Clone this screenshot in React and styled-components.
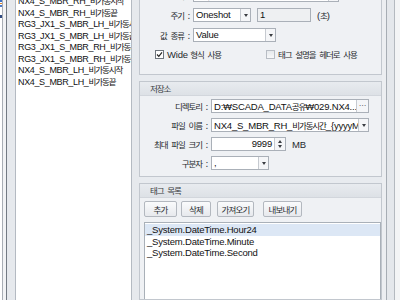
import React from 'react';
import styled, { createGlobalStyle } from 'styled-components';

const GlobalStyle = createGlobalStyle`
  html, body { margin: 0; padding: 0; }
  body {
    background: #e8ebef;
    font-family: "Liberation Sans", "Noto Sans CJK KR", sans-serif;
    font-size: 9.5px;
    letter-spacing: -0.2px;
    color: #111;
  }
`;

const Screen = styled.div`
  display: flex;
  width: 400px;
  height: 300px;
  overflow: hidden;
  background: #e8ebef;
`;

const EdgeMarks = styled.div`
  width: 2px;
  flex: none;
  background: linear-gradient(to bottom, #3b6fc4 0 2px, #fff 2px 3px, #d9822b 3px 4px, #fff 4px 5px, #4a78c8 5px 7px, #fff 7px 15px, #2f4a80 15px 18px, #fff 18px);
`;

const Sash = styled.div`
  width: 3px;
  flex: none;
  border-left: 1px solid #a9aeb5;
  border-right: 1px solid #737a83;
  background: #f2f3f5;
`;

const LeftPane = styled.div`
  width: 132px;
  flex: none;
  box-sizing: border-box;
  padding: 0 7px 0 8px;
  background: #e6e9ed;
`;

const ListBox = styled.div`
  height: 100%;
  box-sizing: border-box;
  background: #fff;
  border-left: 1px solid #b4bac2;
  border-right: 1px solid #b4bac2;
  overflow: hidden;
`;

const ListRows = styled.div`
  margin-top: ${p => p.$offset}px;
`;

const ListRow = styled.div`
  height: 11.5px;
  line-height: 11.5px;
  padding-left: 2px;
  white-space: nowrap;
  overflow: hidden;
  font-size: ${p => (p.$tight ? 9 : 9.5)}px;
  letter-spacing: ${p => (p.$tight ? -0.35 : -0.2)}px;
  background: ${p => (p.$selected ? '#dce7f5' : 'transparent')};
`;

const K = styled.span`
  font-family: "Noto Sans CJK KR", sans-serif;
  font-size: 8.5px;
  letter-spacing: -1.1px;
  word-spacing: 3px;
`;

const RightPane = styled.div`
  width: 243px;
  flex: none;
  display: flex;
  flex-direction: column;
  gap: 6px;
`;

const Group = styled.section`
  border: 1px solid #c2c7ce;
  background: #eff1f4;
  margin-top: ${p => p.$mt || 0}px;
  display: flex;
  flex-direction: column;
  flex: ${p => (p.$grow ? 1 : 'none')};
  min-height: 0;
`;

const GroupHead = styled.div`
  height: 13px;
  line-height: 13px;
  padding-left: 10px;
  background: linear-gradient(#e8ebef, #dde1e6);
  border-bottom: 1px solid #d2d6dc;
  color: #3a3d42;
`;

const GroupBody = styled.div`
  padding: ${p => p.$pad};
  display: flex;
  flex-direction: column;
  flex: 1;
  min-height: 0;
`;

const Form = styled.div`
  display: grid;
  grid-template-columns: ${p => p.$label}px 1fr;
  column-gap: 4px;
  row-gap: ${p => p.$gap}px;
  align-items: center;
`;

const Label = styled.span`
  text-align: right;
  white-space: nowrap;
  color: #26292d;
  font-family: "Noto Sans CJK KR", sans-serif;
  font-size: 8.5px;
  letter-spacing: -1.1px;
  word-spacing: 3px;
`;

const Cell = styled.div`
  display: flex;
  align-items: center;
  gap: ${p => p.$gap || 0}px;
  height: 14px;
`;

const Field = styled.div`
  display: flex;
  width: ${p => p.$w}px;
  height: 14px;
  box-sizing: border-box;
  border: 1px solid #aab0b8;
  background: ${p => (p.$muted ? '#eef0f2' : '#fff')};
  flex: none;
`;

const FieldText = styled.span`
  flex: 1;
  padding: 0 2px;
  line-height: 12px;
  white-space: nowrap;
  overflow: hidden;
  text-align: ${p => (p.$right ? 'right' : 'left')};
`;

const SideBtn = styled.span`
  width: ${p => p.$w || 9}px;
  flex: none;
  border-left: 1px solid #c6cad0;
  background: #f5f6f8;
  display: flex;
  flex-direction: column;
  align-items: center;
  justify-content: center;
  gap: 2px;
  color: #333;
  font-size: 8px;
  line-height: 8px;
`;

const Caret = styled.span`
  width: 0;
  height: 0;
  border-left: 2.5px solid transparent;
  border-right: 2.5px solid transparent;
  ${p => (p.$up ? 'border-bottom' : 'border-top')}: 3px solid #3a3d42;
`;

const Unit = styled.span`
  color: #26292d;
  margin-left: ${p => p.$ml || 0}px;
`;

const CheckRow = styled.div`
  display: flex;
  align-items: center;
  height: 12px;
  margin-top: 6px;
  padding-left: 11px;
`;

const CheckItem = styled.label`
  display: flex;
  align-items: center;
  gap: 3px;
  width: ${p => (p.$w ? `${p.$w}px` : 'auto')};
  color: #26292d;
`;

const Box = styled.span`
  width: 9px;
  height: 9px;
  box-sizing: border-box;
  border: 1px solid ${p => (p.$on ? '#6e757d' : '#b8bdc4')};
  background: ${p => (p.$on ? '#fff' : 'linear-gradient(#e6e9ec, #f7f8f9)')};
  display: flex;
  align-items: center;
  justify-content: center;
`;

const Toolbar = styled.div`
  display: flex;
  height: 16px;
`;

const Button = styled.button`
  all: unset;
  box-sizing: border-box;
  width: ${p => p.$w}px;
  margin-left: ${p => p.$ml || 0}px;
  height: 16px;
  border: 1px solid #b3b8bf;
  border-radius: 2px;
  background: linear-gradient(#fafbfc, #e7e9ed);
  text-align: center;
  line-height: 14px;
  color: #2a2d31;
  font-family: "Noto Sans CJK KR", sans-serif;
  font-size: 8.5px;
  letter-spacing: -0.8px;
`;

const TagList = styled.div`
  flex: 1;
  margin-top: 5px;
  margin-right: -2px;
  background: #fff;
  border: 1px solid #a9b0b8;
  border-bottom: none;
  padding-top: 1px;
`;

const RightEdge = styled.div`
  flex: 1;
  display: flex;
  padding-left: 4px;
  background: #eceef1;
`;

const Rail = styled.div`
  width: 7px;
  border-left: 1px solid #a7adb4;
  border-right: 1px solid #b4b9bf;
  background: #e4e7eb;
`;

const Margin = styled.div`
  flex: 1;
  background: #f3f4f5;
`;

const leftItems = [
  ['NX4_S_MBR_RH_', '비가동시작'],
  ['NX4_S_MBR_RH_', '비가동끝'],
  ['RG3_JX1_S_MBR_LH_', '비가동시작'],
  ['RG3_JX1_S_MBR_LH_', '비가동끝'],
  ['RG3_JX1_S_MBR_RH_', '비가동시작'],
  ['RG3_JX1_S_MBR_RH_', '비가동끝'],
  ['NX4_S_MBR_LH_', '비가동시작'],
  ['NX4_S_MBR_LH_', '비가동끝'],
];

const tags = ['_System.DateTime.Hour24', '_System.DateTime.Minute', '_System.DateTime.Second'];

function Check({ on }) {
  return (
    <Box $on={on}>
      {on && (
        <svg width="7" height="7" viewBox="0 0 7 7">
          <path d="M1 3.5 L2.8 5.3 L6 1.3" fill="none" stroke="#222" strokeWidth="1.2" />
        </svg>
      )}
    </Box>
  );
}

function Combo({ w, children, muted }) {
  return (
    <Field $w={w} $muted={muted}>
      <FieldText>{children}</FieldText>
      <SideBtn>
        <Caret />
      </SideBtn>
    </Field>
  );
}

export default function App() {
  return (
    <>
      <GlobalStyle />
      <Screen>
        <EdgeMarks />
        <Sash />
        <LeftPane>
          <ListBox>
            <ListRows $offset={-5}>
              {leftItems.map(([a, b], i) => (
                <ListRow key={i} $tight>
                  {a}
                  <K>{b}</K>
                </ListRow>
              ))}
            </ListRows>
          </ListBox>
        </LeftPane>

        <RightPane>
          <Group $mt={-30}>
            <GroupHead>
              <K>데이터 수집</K>
            </GroupHead>
            <GroupBody $pad="3px 0 14px 4px">
              <Form $label={45} $gap={6}>
                <Label>트리거 :</Label>
                <Cell>
                  <Combo w={146}>
                    <K>비가동 상태 변경</K>
                  </Combo>
                </Cell>
                <Label>주기 :</Label>
                <Cell $gap={6}>
                  <Combo w={58}>Oneshot</Combo>
                  <Field $w={54} $muted>
                    <FieldText>1</FieldText>
                  </Field>
                  <Unit>
                    (<K>초</K>)
                  </Unit>
                </Cell>
                <Label>값 종류 :</Label>
                <Cell>
                  <Combo w={83}>Value</Combo>
                </Cell>
              </Form>
              <CheckRow>
                <CheckItem $w={111}>
                  <Check on />
                  <span>
                    Wide <K>형식 사용</K>
                  </span>
                </CheckItem>
                <CheckItem>
                  <Check />
                  <K>태그 설명을 헤더로 사용</K>
                </CheckItem>
              </CheckRow>
            </GroupBody>
          </Group>

          <Group>
            <GroupHead>
              <K>저장소</K>
            </GroupHead>
            <GroupBody $pad="3px 0 6px 4px">
              <Form $label={63} $gap={5}>
                <Label>디렉토리 :</Label>
                <Cell>
                  <Field $w={158}>
                    <FieldText>
                      D:₩SCADA_DATA<K>공유</K>₩029.NX4...
                    </FieldText>
                    <SideBtn $w={11}>···</SideBtn>
                  </Field>
                </Cell>
                <Label>파일 이름 :</Label>
                <Cell>
                  <Combo w={158}>
                    NX4_S_MBR_RH_<K>비가동시간</K>_{'{'}yyyyMMdd{'}'}
                  </Combo>
                </Cell>
                <Label>최대 파일 크기 :</Label>
                <Cell>
                  <Field $w={75}>
                    <FieldText $right>9999</FieldText>
                    <SideBtn $w={10}>
                      <Caret $up />
                      <Caret />
                    </SideBtn>
                  </Field>
                  <Unit $ml={6}>MB</Unit>
                </Cell>
                <Label>구분자 :</Label>
                <Cell>
                  <Combo w={58}>,</Combo>
                </Cell>
              </Form>
            </GroupBody>
          </Group>

          <Group $grow>
            <GroupHead>
              <K>태그 목록</K>
            </GroupHead>
            <GroupBody $pad="3px 2px 0 4px">
              <Toolbar>
                <Button $w={33}>추가</Button>
                <Button $w={30} $ml={4}>삭제</Button>
                <Button $w={37} $ml={6}>가져오기</Button>
                <Button $w={39} $ml={9}>내보내기</Button>
              </Toolbar>
              <TagList>
                {tags.map((t, i) => (
                  <ListRow key={t} $selected={i === 0}>
                    {t}
                  </ListRow>
                ))}
              </TagList>
            </GroupBody>
          </Group>
        </RightPane>

        <RightEdge>
          <Rail />
          <Margin />
        </RightEdge>
      </Screen>
    </>
  );
}
